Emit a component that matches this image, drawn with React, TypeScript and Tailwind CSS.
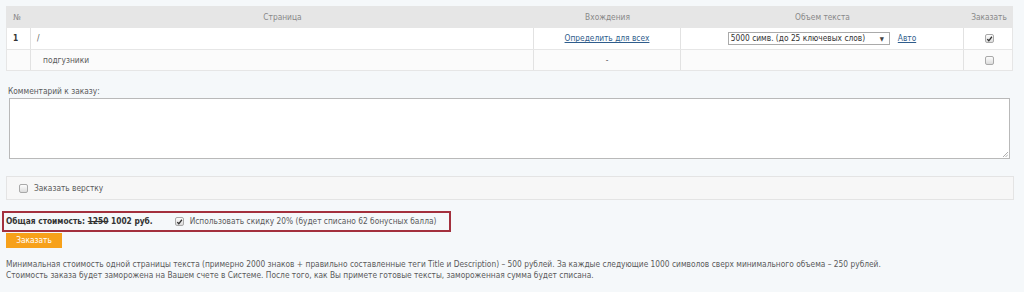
import React from "react";

// Заказ текстов: таблица страниц, комментарий, итоговая стоимость

const font = { fontFamily: '"DejaVu Sans Condensed", "DejaVu Sans", sans-serif' };

function Check({ checked = false }: { checked?: boolean }) {
  return (
    <span className="inline-flex h-[9px] w-[9px] shrink-0 items-center justify-center rounded-[2px] border border-[#a9a9a9] bg-gradient-to-b from-[#fdfdfd] to-[#dcdcdc]">
      {checked && (
        <svg viewBox="0 0 10 10" className="h-[8px] w-[8px]">
          <path d="M1.8 5.2 L4 7.6 L8.4 1.8" fill="none" stroke="#333" strokeWidth="1.9" />
        </svg>
      )}
    </span>
  );
}

function Cell({ children, className = "" }: { children?: React.ReactNode; className?: string }) {
  return <div className={`flex items-center border-r border-[#e2e2e2] last:border-r-0 ${className}`}>{children}</div>;
}

export default function App() {
  const cols = "grid grid-cols-[24px_503px_147px_283px_50px]";
  return (
    <div className="min-h-[292px] whitespace-nowrap bg-[#f5f8fa] px-[6px] pt-[6px] text-[8.3px] text-[#5a5a5a]" style={font}>
      {/* таблица страниц */}
      <div className="w-[1007px] border border-[#e6e6e6] bg-white">
        <div className={`${cols} h-[21px] bg-[#e6e6e6] text-[#888]`}>
          <div className="flex items-center pl-[6px]">№</div>
          <div className="flex items-center justify-center">Страница</div>
          <div className="flex items-center justify-center">Вхождения</div>
          <div className="flex items-center justify-center">Объем текста</div>
          <div className="flex items-center justify-center">Заказать</div>
        </div>
        <div className={`${cols} h-[22px] border-b border-[#e6e6e6]`}>
          <Cell className="pl-[6px] font-bold text-[#333]">1</Cell>
          <Cell className="pl-[6px]">/</Cell>
          <Cell className="justify-center">
            <a className="text-[#2f5d8c] underline">Определить для всех</a>
          </Cell>
          <Cell className="justify-center gap-[8px]">
            <span className="flex h-[13px] w-[162px] items-center justify-between border border-[#aaa] bg-white pl-[2px] pr-[5px] text-[#333]">
              <span>5000 симв. (до 25 ключевых слов)</span>
              <span className="text-[6px] text-[#444]">▼</span>
            </span>
            <a className="text-[#2f5d8c] underline">Авто</a>
          </Cell>
          <Cell className="justify-center">
            <Check checked />
          </Cell>
        </div>
        <div className={`${cols} h-[20px] bg-[#fbfbfb]`}>
          <Cell />
          <Cell className="pl-[12px]">подгузники</Cell>
          <Cell className="justify-center">-</Cell>
          <Cell />
          <Cell className="justify-center">
            <Check />
          </Cell>
        </div>
      </div>

      {/* комментарий */}
      <div className="mt-[15px] pl-[2px] leading-[11px]">Комментарий к заказу:</div>
      <div className="relative ml-[3px] mt-[1px] h-[61px] w-[1001px] border border-[#b9b9b9] bg-white">
        <svg viewBox="0 0 6 6" className="absolute bottom-[1px] right-[1px] h-[6px] w-[6px]">
          <path d="M1 6 L6 1 M3.5 6 L6 3.5" stroke="#999" strokeWidth="0.8" />
        </svg>
      </div>

      {/* вёрстка */}
      <div className="mt-[17px] flex h-[24px] w-[1008px] items-center gap-[6px] border border-[#e4e4e4] bg-[#f7f7f7] pl-[12px]">
        <Check />
        <span>Заказать верстку</span>
      </div>

      {/* итог */}
      <div className="-ml-[4px] mt-[11px] flex h-[21px] w-[449px] items-center border-2 border-[#a3303d] pl-[2px]">
        <span className="font-bold text-[#333]">
          Общая стоимость: <span className="line-through">1250</span> 1002 руб.
        </span>
        <span className="ml-[22px] flex items-center gap-[6px]">
          <Check checked />
          <span>Использовать скидку 20% (будет списано 62 бонусных балла)</span>
        </span>
      </div>
      <button className="mt-[1px] flex h-[15px] w-[56px] items-center justify-center bg-[#f7a11a] text-[8.3px] text-white">
        Заказать
      </button>

      <div className="mt-[11px] leading-[11px]">
        <div>
          Минимальная стоимость одной страницы текста (примерно 2000 знаков + правильно составленные теги Title и
          Description) – 500 рублей. За каждые следующие 1000 символов сверх минимального объема – 250 рублей.
        </div>
        <div>
          Стоимость заказа будет заморожена на Вашем счете в Системе. После того, как Вы примете готовые тексты,
          замороженная сумма будет списана.
        </div>
      </div>
    </div>
  );
}
